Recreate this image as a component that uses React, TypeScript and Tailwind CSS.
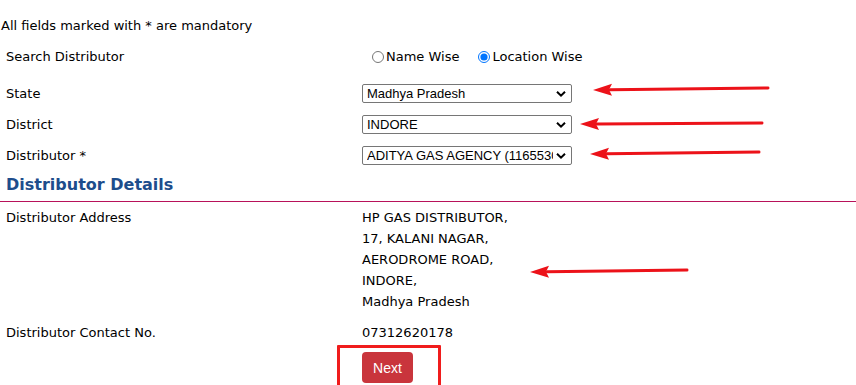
import React from "react";

function Chevron() {
  return (
    <svg
      className="pointer-events-none absolute right-[6px] top-1/2 -translate-y-1/2"
      width="10"
      height="7"
      viewBox="0 0 10 7"
    >
      <path d="M1 1.2 L5 5.2 L9 1.2" fill="none" stroke="#000" strokeWidth="2" />
    </svg>
  );
}

function FakeSelect({ value }: { value: string }) {
  return (
    <div className="relative w-[210px] h-[19px]">
      <select
        defaultValue={value}
        className="appearance-none w-full h-full border border-[#767676] rounded-[2px] bg-white pl-[4px] pr-[18px] text-[13px] leading-[17px] text-black overflow-hidden"
        style={{ fontFamily: '"Liberation Sans", Arial, sans-serif' }}
      >
        <option value={value}>{value}</option>
      </select>
      <Chevron />
    </div>
  );
}

function Arrow({ x1, y1, x2, y2 }: { x1: number; y1: number; x2: number; y2: number }) {
  const head = 19;
  const hw = 6;
  const bx = x2 + head;
  const by = y2 + ((y1 - y2) * head) / (x1 - x2);
  return (
    <g>
      <line x1={x1} y1={y1} x2={bx - 2} y2={by} stroke="#ec1219" strokeWidth="3" strokeLinecap="round" />
      <polygon points={`${x2},${y2} ${bx},${by - hw} ${bx - 3},${by} ${bx},${by + hw}`} fill="#ec1219" />
    </g>
  );
}

export default function App() {
  const verdana = { fontFamily: '"DejaVu Sans", Verdana, sans-serif' };
  return (
    <div className="relative w-[856px] h-[385px] overflow-hidden bg-white text-black" style={verdana}>
      <div className="text-[13px] leading-[16px]">
        <div className="pt-[18px] pl-[1px]">All fields marked with * are mandatory</div>

        <div className="mt-[15px] flex h-[16px] items-center">
          <div className="w-[362px] pl-[6px]">Search Distributor</div>
          <div className="flex items-center">
            <label className="ml-[10px] flex items-center">
              <input type="radio" name="mode" className="m-0 w-[12px] h-[12px] accent-[#0075ff]" />
              <span className="ml-[2px]">Name Wise</span>
            </label>
            <label className="ml-[19px] flex items-center">
              <input type="radio" name="mode" defaultChecked className="m-0 w-[12px] h-[12px] accent-[#0075ff]" />
              <span className="ml-[2px]">Location Wise</span>
            </label>
          </div>
        </div>

        <div className="mt-[19px] flex h-[19px] items-center">
          <div className="w-[362px] pl-[6px]">State</div>
          <FakeSelect value="Madhya Pradesh" />
        </div>
        <div className="mt-[12px] flex h-[19px] items-center">
          <div className="w-[362px] pl-[6px]">District</div>
          <FakeSelect value="INDORE" />
        </div>
        <div className="mt-[12px] flex h-[19px] items-center">
          <div className="w-[362px] pl-[6px]">Distributor *</div>
          <FakeSelect value="ADITYA GAS AGENCY (1165530)" />
        </div>

        <div className="mt-[9px] h-[22px] pl-[6px] text-[16px] leading-[22px] font-bold text-[#1d4d8c]">
          Distributor Details
        </div>
        <div className="mt-[5px] h-[1px] bg-[#b8125a]" />

        <div className="mt-[5px] flex leading-[21px]">
          <div className="w-[362px] pl-[6px]">Distributor Address</div>
          <div>
            <div>HP GAS DISTRIBUTOR,</div>
            <div>17, KALANI NAGAR,</div>
            <div>AERODROME ROAD,</div>
            <div>INDORE,</div>
            <div>Madhya Pradesh</div>
          </div>
        </div>

        <div className="mt-[10px] flex leading-[21px]">
          <div className="w-[362px] pl-[6px]">Distributor Contact No.</div>
          <div>07312620178</div>
        </div>

        <div className="mt-[9px] pl-[362px]">
          <button
            className="w-[51px] h-[31px] rounded-[4px] bg-[#c9353c] text-white text-[14px]"
            style={{ fontFamily: '"Liberation Sans", Arial, sans-serif' }}
          >
            Next
          </button>
        </div>
      </div>

      <div className="absolute left-[337px] top-[345px] w-[104px] h-[50px] border-[3px] border-[#f01c1c] rounded-[1px]" />

      <svg className="absolute left-0 top-0 pointer-events-none" width="856" height="385">
        <Arrow x1={768} y1={88} x2={593} y2={90} />
        <Arrow x1={762} y1={123} x2={580} y2={124} />
        <Arrow x1={759} y1={152} x2={590} y2={154} />
        <Arrow x1={687} y1={270} x2={530} y2={272} />
      </svg>
    </div>
  );
}
